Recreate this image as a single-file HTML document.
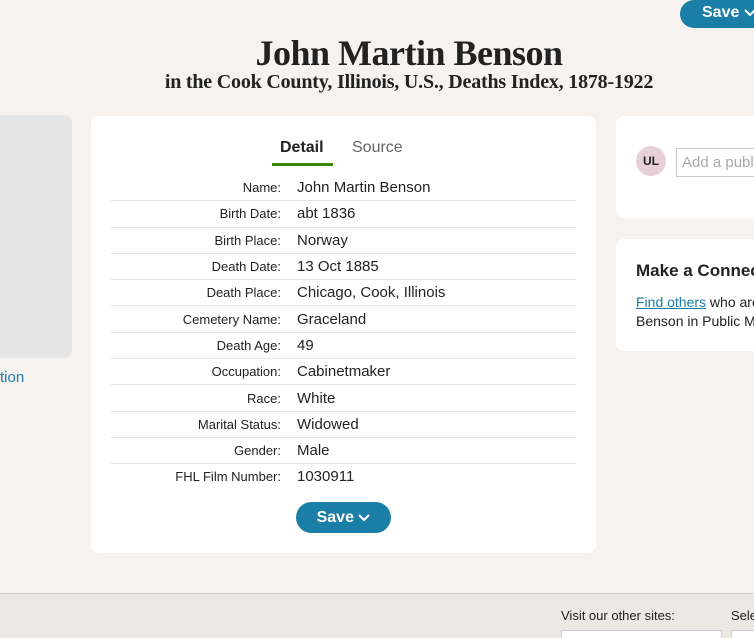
<!DOCTYPE html>
<html style="overflow:hidden;height:638px"><head><style>
body{margin:0;width:754px;height:638px;overflow:hidden;background:#f5f2ef;font-family:"Liberation Sans",sans-serif;color:#222;position:relative}
.abs{position:absolute}
.btn{background:#1a7ea6;color:#fff;font-weight:bold;font-size:16px;border-radius:16px;}
h1{position:absolute;top:32px;left:0;width:818px;text-align:center;margin:0;font-family:"Liberation Serif",serif;font-size:36px;font-weight:bold;letter-spacing:-0.5px}
.sub{position:absolute;top:71px;left:0;width:818px;text-align:center;font-family:"Liberation Serif",serif;font-size:20px;font-weight:bold;letter-spacing:-0.2px}
.card{position:absolute;background:#fff;border-radius:8px}
table{border-collapse:collapse;position:absolute;left:20px;top:59px;width:465px}
td{height:25.3px;border-bottom:1px solid #e4e4e4;padding:0}
td.l{text-align:right;font-size:13px;width:170px;padding-right:16px}
td.v{font-size:15px}
tr:last-child td{border-bottom:none}
svg{vertical-align:middle}
</style></head><body>
<div class="abs btn" style="left:680px;top:0;width:90px;height:28px;line-height:26px;padding-left:22px;box-sizing:border-box">Save <svg width="12" height="8" viewBox="0 0 12 8"><path d="M1 1l5 5 5-5" stroke="#fff" stroke-width="2" fill="none"/></svg></div>
<h1>John Martin Benson</h1>
<div class="sub">in the Cook County, Illinois, U.S., Deaths Index, 1878-1922</div>
<div class="abs" style="left:-10px;top:115px;width:82px;height:243px;background:#e6e6e6;border-radius:8px"></div>
<div class="abs" style="left:0;top:369px;color:#1a7ea6;font-size:15px">tion</div>
<div class="card" style="left:91px;top:116px;width:505px;height:437px">
<div class="abs" style="left:189px;top:23px;font-size:16px;font-weight:bold">Detail</div>
<div class="abs" style="left:181px;top:47px;width:61px;height:3px;background:#3a8a00"></div>
<div class="abs" style="left:261px;top:23px;font-size:16px;color:#666">Source</div>
<table>
<tr><td class="l">Name:</td><td class="v">John Martin Benson</td></tr>
<tr><td class="l">Birth Date:</td><td class="v">abt 1836</td></tr>
<tr><td class="l">Birth Place:</td><td class="v">Norway</td></tr>
<tr><td class="l">Death Date:</td><td class="v">13 Oct 1885</td></tr>
<tr><td class="l">Death Place:</td><td class="v">Chicago, Cook, Illinois</td></tr>
<tr><td class="l">Cemetery Name:</td><td class="v">Graceland</td></tr>
<tr><td class="l">Death Age:</td><td class="v">49</td></tr>
<tr><td class="l">Occupation:</td><td class="v">Cabinetmaker</td></tr>
<tr><td class="l">Race:</td><td class="v">White</td></tr>
<tr><td class="l">Marital Status:</td><td class="v">Widowed</td></tr>
<tr><td class="l">Gender:</td><td class="v">Male</td></tr>
<tr><td class="l">FHL Film Number:</td><td class="v">1030911</td></tr>
</table>
<div class="abs btn" style="left:205px;top:386px;width:95px;height:31px;line-height:31px;text-align:center">Save <svg width="12" height="8" viewBox="0 0 12 8"><path d="M1 1l5 5 5-5" stroke="#fff" stroke-width="2" fill="none"/></svg></div>
</div>
<div class="card" style="left:616px;top:116px;width:160px;height:102px">
<div class="abs" style="left:20px;top:30px;width:30px;height:30px;border-radius:50%;background:#e8d0d8;font-size:12px;font-weight:bold;text-align:center;line-height:30px">UL</div>
<div class="abs" style="left:60px;top:32px;width:110px;height:29px;border:1px solid #ccc;box-sizing:border-box;color:#aaa;font-size:15px;line-height:27px;padding-left:5px">Add a public</div>
</div>
<div class="card" style="left:616px;top:239px;width:160px;height:112px">
<div class="abs" style="left:20px;top:22px;font-size:17px;font-weight:bold;white-space:nowrap">Make a Connection</div>
<div class="abs" style="left:20px;top:54px;font-size:14px;line-height:19px;white-space:nowrap"><span style="color:#1a7ea6;text-decoration:underline">Find others</span> who are<br>Benson in Public Member</div>
</div>
<div class="abs" style="left:0;top:593px;width:754px;height:45px;background:#ece9e5;border-top:1px solid #ccc"></div>
<div class="abs" style="left:561px;top:608px;font-size:13px">Visit our other sites:</div>
<div class="abs" style="left:731px;top:608px;font-size:13px">Select</div>
<div class="abs" style="left:561px;top:630px;width:159px;height:8px;background:#fff;border:1px solid #ccc;border-bottom:none"></div>
<div class="abs" style="left:731px;top:630px;width:23px;height:8px;background:#fff;border:1px solid #ccc;border-bottom:none;border-right:none"></div>
</body></html>
